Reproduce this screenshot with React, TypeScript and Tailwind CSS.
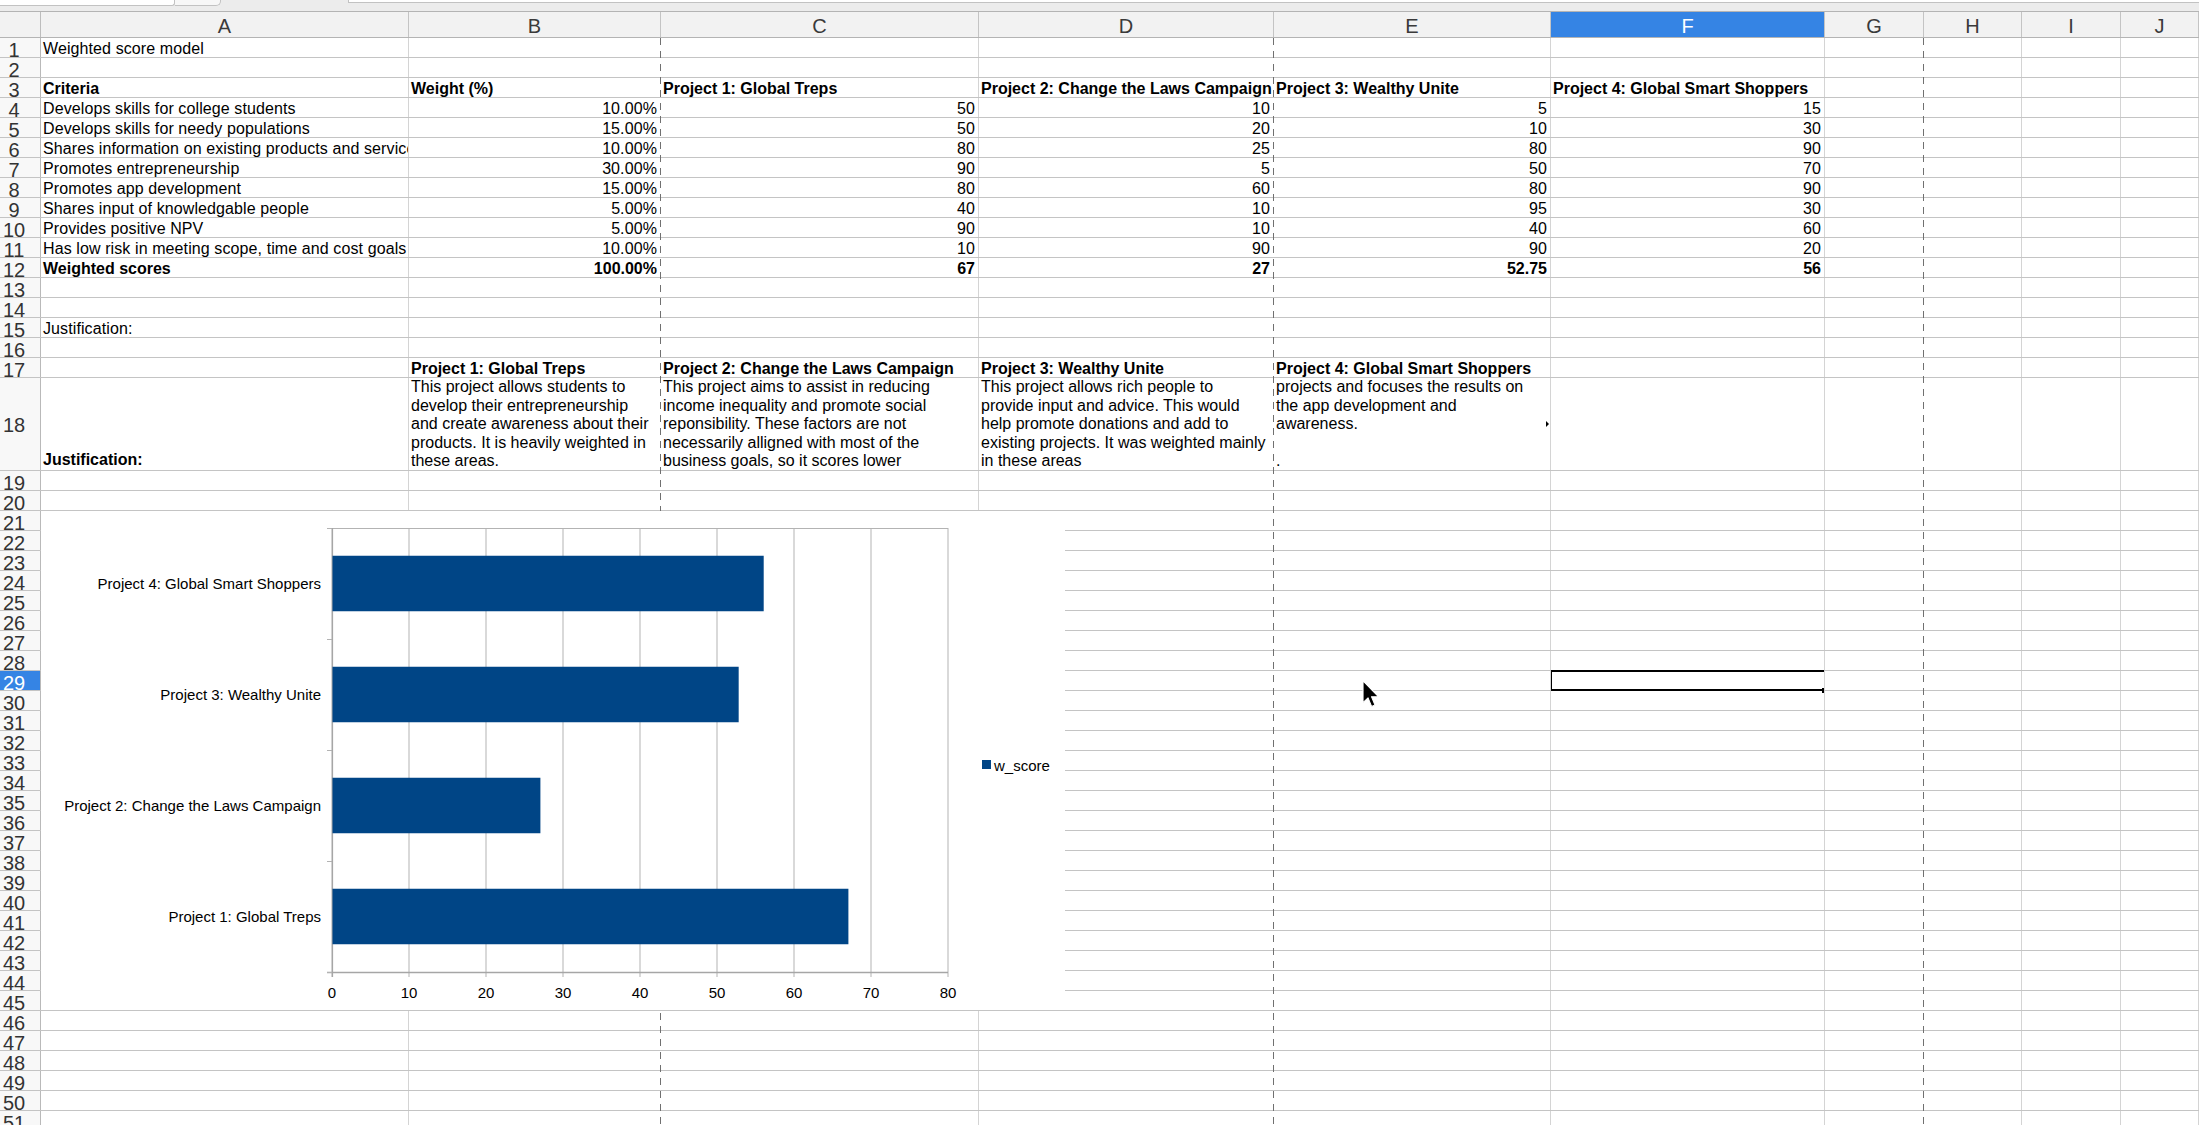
import React from 'react';

type Cell = { t?: string; r?: boolean; b?: boolean };

const COLW = ['w-[368px]', 'w-[252px]', 'w-[318px]', 'w-[295px]', 'w-[277px]', 'w-[274px]', 'w-[99px]', 'w-[98px]', 'w-[99px]', 'w-[78px]'];
const COLB = [
  'border-r-[#d4d4d4]',
  'border-r-transparent',
  'border-r-[#d4d4d4]',
  'border-r-transparent',
  'border-r-[#d4d4d4]',
  'border-r-[#d4d4d4]',
  'border-r-transparent',
  'border-r-[#d4d4d4]',
  'border-r-[#d4d4d4]',
  'border-r-[#d4d4d4]',
];
const LETTERS = ['A', 'B', 'C', 'D', 'E', 'F', 'G', 'H', 'I', 'J'];

const L = (t: string): Cell => ({ t });
const N = (t: string): Cell => ({ t, r: true });
const B = (t: string): Cell => ({ t, b: true });
const BN = (t: string): Cell => ({ t, r: true, b: true });

const DATA: Record<number, Cell[]> = {
  1: [L('Weighted score model')],
  3: [B('Criteria'), B('Weight (%)'), B('Project 1: Global Treps'), B('Project 2: Change the Laws Campaign'), B('Project 3: Wealthy Unite'), B('Project 4: Global Smart Shoppers')],
  4: [L('Develops skills for college students'), N('10.00%'), N('50'), N('10'), N('5'), N('15')],
  5: [L('Develops skills for needy populations'), N('15.00%'), N('50'), N('20'), N('10'), N('30')],
  6: [L('Shares information on existing products and services'), N('10.00%'), N('80'), N('25'), N('80'), N('90')],
  7: [L('Promotes entrepreneurship'), N('30.00%'), N('90'), N('5'), N('50'), N('70')],
  8: [L('Promotes app development'), N('15.00%'), N('80'), N('60'), N('80'), N('90')],
  9: [L('Shares input of knowledgable people'), N('5.00%'), N('40'), N('10'), N('95'), N('30')],
  10: [L('Provides positive NPV'), N('5.00%'), N('90'), N('10'), N('40'), N('60')],
  11: [L('Has low risk in meeting scope, time and cost goals'), N('10.00%'), N('10'), N('90'), N('90'), N('20')],
  12: [B('Weighted scores'), BN('100.00%'), BN('67'), BN('27'), BN('52.75'), BN('56')],
  15: [L('Justification:')],
  17: [{}, B('Project 1: Global Treps'), B('Project 2: Change the Laws Campaign'), B('Project 3: Wealthy Unite'), B('Project 4: Global Smart Shoppers')],
};

const JUST: string[][] = [
  [
    'This project allows students to',
    'develop their entrepreneurship',
    'and create awareness about their',
    'products. It is heavily weighted in',
    'these areas.',
  ],
  [
    'This project aims to assist in reducing',
    'income inequality and promote social',
    'reponsibility. These factors are not',
    'necessarily alligned with most of the',
    'business goals, so it scores lower',
  ],
  [
    'This project allows rich people to',
    'provide input and advice. This would',
    'help promote donations and add to',
    'existing projects. It was weighted mainly',
    'in these areas',
  ],
  ['projects and focuses the results on', 'the app development and', 'awareness.', '\u00a0', '.'],
];

function RowHeader({ n, sel }: { n: number; sel?: boolean }) {
  return (
    <div
      className={`w-[41px] shrink-0 h-full border-r border-r-[#b9b9b9] ${sel ? 'bg-[#3584e4] text-white' : 'bg-[#f8f8f8] text-[#333333]'}`}
    >
      <div className="w-[28px] text-center text-[20px] leading-[20px] pt-[2px] whitespace-nowrap">{n}</div>
    </div>
  );
}

function Row({ n }: { n: number }) {
  const cells = DATA[n] || [];
  const sel = n === 29;
  return (
    <div className="flex h-[20px] border-b border-b-[#c4c4c4] shrink-0">
      <RowHeader n={n} sel={sel} />
      {LETTERS.map((_, i) => {
        const c = cells[i] || {};
        return (
          <div
            key={i}
            className={`${COLW[i]} shrink-0 h-full border-r ${COLB[i]} relative whitespace-nowrap overflow-x-clip pl-[2px] pr-[3px] pt-[2px] leading-[18px] text-[16px] text-black ${c.r ? 'text-right' : 'text-left'} ${c.b ? 'font-bold' : 'font-normal tracking-[0.1px]'}`}
          >
            {c.t}
            {sel && i === 5 && (
              <>
                <div className="absolute -top-[1px] -left-[1px] w-[276px] h-[21px] border-2 border-black z-[5]" />
                <div className="absolute -right-[3px] -bottom-[3px] w-[5px] h-[5px] bg-black z-[6]" />
              </>
            )}
          </div>
        );
      })}
    </div>
  );
}

function Row18() {
  return (
    <div className="flex h-[93px] border-b border-b-[#c4c4c4] shrink-0">
      <div className="w-[41px] shrink-0 h-full border-r border-r-[#b9b9b9] bg-[#f8f8f8] text-[#333333] flex items-center">
        <div className="w-[28px] text-center text-[20px] leading-[20px] pt-[2px]">18</div>
      </div>
      <div className={`${COLW[0]} shrink-0 h-full border-r ${COLB[0]} flex items-end pl-[2px] text-[16px] leading-[18.6px] font-bold text-black`}>
        Justification:
      </div>
      {JUST.map((lines, k) => (
        <div
          key={k}
          className={`${COLW[k + 1]} shrink-0 h-full border-r ${COLB[k + 1]} relative overflow-x-clip pl-[2px] text-[16px] leading-[18.6px] text-black whitespace-nowrap`}
        >
          {lines.map((ln, j) => (
            <div key={j}>{ln}</div>
          ))}
          {k === 3 && (
            <div className="absolute right-[1px] top-[43px] w-0 h-0 border-y-[3px] border-y-transparent border-l-[3px] border-l-black" />
          )}
        </div>
      ))}
      {[5, 6, 7, 8, 9].map((i) => (
        <div key={i} className={`${COLW[i]} shrink-0 h-full border-r ${COLB[i]}`} />
      ))}
    </div>
  );
}

function Chart() {
  const Lx = 291;
  const Rx = 907;
  const T = 17;
  const Bt = 461;
  const sx = (Rx - Lx) / 80;
  const band = (Bt - T) / 4;
  const cats = [
    { label: 'Project 4: Global Smart Shoppers', v: 56 },
    { label: 'Project 3: Wealthy Unite', v: 52.75 },
    { label: 'Project 2: Change the Laws Campaign', v: 27 },
    { label: 'Project 1: Global Treps', v: 67 },
  ];
  const ticks = [0, 10, 20, 30, 40, 50, 60, 70, 80];
  const ff = "'Liberation Sans', Arial, sans-serif";
  return (
    <svg width={1024} height={499} className="block" style={{ fontFamily: ff }}>
      {ticks.map((t) => (
        <line key={t} x1={Lx + t * sx} x2={Lx + t * sx} y1={T} y2={Bt + 5} stroke="#b3b3b3" strokeWidth={1} />
      ))}
      <line x1={Lx} x2={Rx} y1={T + 0.5} y2={T + 0.5} stroke="#b3b3b3" strokeWidth={1} />
      <line x1={Lx - 5} x2={Rx} y1={Bt + 0.5} y2={Bt + 0.5} stroke="#a6a6a6" strokeWidth={1.5} />
      {[0, 1, 2, 3, 4].map((k) => (
        <line key={k} x1={Lx - 5} x2={Lx} y1={T + k * band + 0.5} y2={T + k * band + 0.5} stroke="#b3b3b3" strokeWidth={1} />
      ))}
      <line x1={Lx + 0.5} x2={Lx + 0.5} y1={T} y2={Bt + 5} stroke="#a6a6a6" strokeWidth={1.2} />
      {cats.map((c, i) => {
        const cy = T + band * (i + 0.5);
        const h = band * 0.5;
        return (
          <g key={i}>
            <rect x={Lx + 0.5} y={cy - h / 2} width={c.v * sx} height={h} fill="#004586" />
            <text x={280} y={cy} fontSize={15} textAnchor="end" dominantBaseline="central" fill="#000">
              {c.label}
            </text>
          </g>
        );
      })}
      {ticks.map((t) => (
        <text key={t} x={Lx + t * sx} y={481} fontSize={15} textAnchor="middle" dominantBaseline="central" fill="#000">
          {t}
        </text>
      ))}
      <rect x={941} y={249} width={9} height={9} fill="#004586" />
      <text x={953} y={254} fontSize={15} dominantBaseline="central" fill="#000">
        w_score
      </text>
    </svg>
  );
}

export default function App() {
  const rows: number[] = [];
  for (let i = 1; i <= 52; i++) rows.push(i);
  return (
    <div className="w-[2199px] h-[1125px] overflow-hidden bg-white relative font-['Liberation_Sans',Arial,sans-serif]">
      {/* toolbar remnant */}
      <div className="h-[11px] bg-[#ececec] flex items-start">
        <div className="w-[175px] h-[6px] bg-white border-r border-b border-[#c2c2c2] rounded-br-[3px]" />
        <div className="w-[46px] h-[6px] bg-[#f7f7f7] border-r border-b border-[#c2c2c2] rounded-br-[5px]" />
        <div className="ml-[127px] flex-1 h-[3px] bg-white border-b border-l border-[#c2c2c2]" />
      </div>
      {/* column header */}
      <div className="flex h-[27px] border-t border-b border-[#b4b4b4] bg-[#f2f2f2]">
        <div className="w-[41px] shrink-0 h-full border-r border-r-[#bdbdbd]" />
        {LETTERS.map((l, i) => (
          <div
            key={l}
            className={`${COLW[i]} shrink-0 h-full border-r border-r-[#c4c4c4] flex items-center justify-center pt-[2px] text-[20px] leading-[20px] ${i === 5 ? 'bg-[#3584e4] text-white' : 'text-[#3a3a3a]'}`}
          >
            {l}
          </div>
        ))}
      </div>
      {/* sheet body */}
      <div className="relative">
        {rows.map((n) => (n === 18 ? <Row18 key={n} /> : <Row key={n} n={n} />))}
        {/* page break lines */}
        <div className="absolute top-0 bottom-0 left-[660px] w-px z-[2] bg-[image:repeating-linear-gradient(to_bottom,#707070_0px,#707070_7px,transparent_7px,transparent_13px)]" />
        <div className="absolute top-0 bottom-0 left-[1273px] w-px z-[2] bg-[image:repeating-linear-gradient(to_bottom,#707070_0px,#707070_7px,transparent_7px,transparent_13px)]" />
        <div className="absolute top-0 bottom-0 left-[1923px] w-px z-[2] bg-[image:repeating-linear-gradient(to_bottom,#707070_0px,#707070_7px,transparent_7px,transparent_13px)]" />
        {/* embedded chart object */}
        <div className="absolute left-[41px] top-[473px] w-[1024px] h-[499px] bg-white z-10">
          <Chart />
        </div>
      </div>
      {/* mouse pointer */}
      <svg className="absolute left-[1362px] top-[680px] z-20" width="18" height="28" viewBox="0 0 12 19">
        <path d="M0.6 0.6 L0.6 15.4 L4 12.1 L6.4 17.9 L8.7 17 L6.3 11.3 L11 11.3 Z" fill="#000" stroke="#fff" strokeWidth="0.7" strokeLinejoin="round" />
      </svg>
    </div>
  );
}
